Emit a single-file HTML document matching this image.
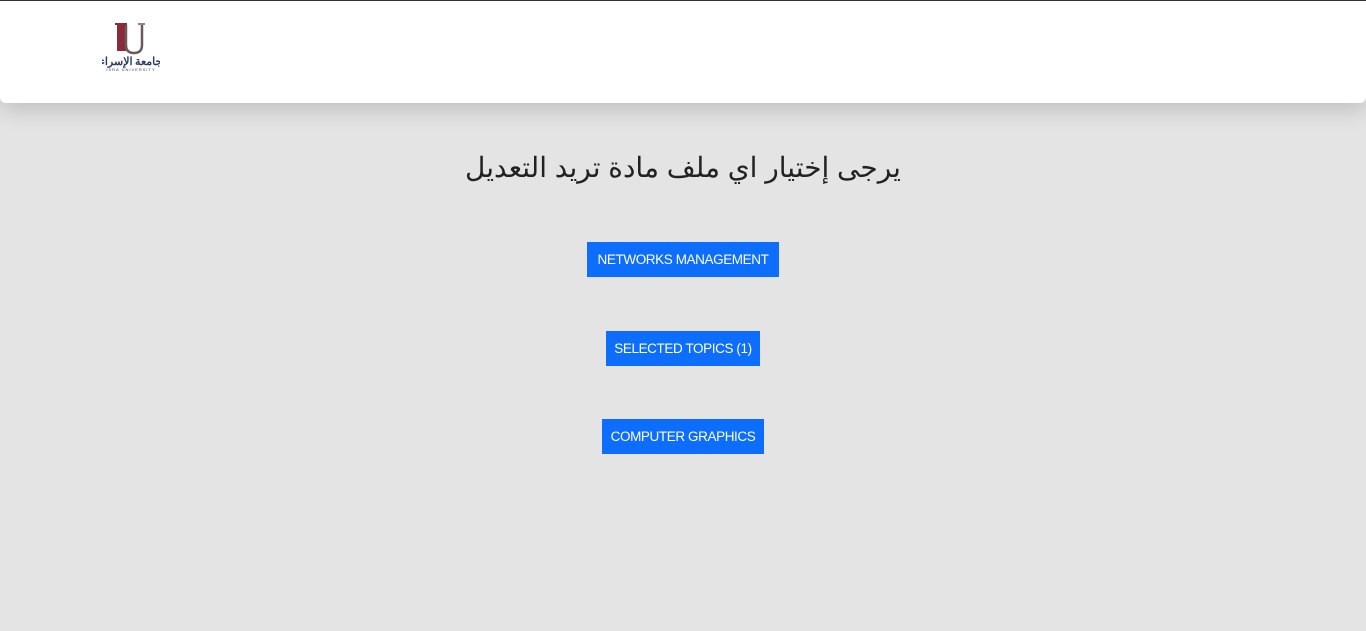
<!DOCTYPE html>
<html><head><meta charset="utf-8"><style>
body{margin:0;background:#e4e4e4;font-family:"Liberation Sans","Noto Sans CJK SC",sans-serif;width:1366px;height:631px;overflow:hidden;position:relative}
.hdr{position:absolute;left:0;top:0;width:1366px;height:103px;background:#fff;border-top:1px solid #333;box-sizing:border-box;border-radius:0 0 6px 6px;box-shadow:0 6px 24px rgba(0,0,0,.18)}
.logo{position:absolute;left:102px;top:18px;width:58px;height:56px}
h1{position:absolute;top:151px;left:0;width:1366px;text-align:center;margin:0;font-weight:normal;font-size:28px;color:#222;font-family:"Liberation Sans","WenQuanYi Zen Hei","Noto Sans CJK SC",sans-serif}
.btn{position:absolute;background:#0d6efd;color:#fff;font-size:13.5px;height:35px;line-height:36px;text-align:center;letter-spacing:-.4px}
</style></head><body>
<div class="hdr">
<svg class="logo" viewBox="0 0 58 56">
<path d="M15 4h9v28h-9z" fill="#8a2a3a"/>
<path d="M13 4h12v2h-12z" fill="#8a2a3a"/>
<path d="M24 6v20q0 8 8 8q8 0 8-8v-20" fill="none" stroke="#6a5a5e" stroke-width="2.5"/>
<path d="M36 5h7" stroke="#6a5a5e" stroke-width="1.5"/>
<text x="29" y="46" font-size="11" font-weight="bold" text-anchor="middle" fill="#2a3d6a" font-family="Noto Sans CJK SC,sans-serif">جامعة الإسراء</text>
<text x="29" y="52" font-size="4" text-anchor="middle" fill="#2a3d6a" letter-spacing="1">ISRA UNIVERSITY</text>
</svg>
</div>
<h1 dir="rtl">يرجى إختيار اي ملف مادة تريد التعديل</h1>
<div class="btn" style="left:587px;top:242px;width:192px">NETWORKS MANAGEMENT</div>
<div class="btn" style="left:606px;top:331px;width:154px">SELECTED TOPICS (1)</div>
<div class="btn" style="left:602px;top:419px;width:162px">COMPUTER GRAPHICS</div>
</body></html>
